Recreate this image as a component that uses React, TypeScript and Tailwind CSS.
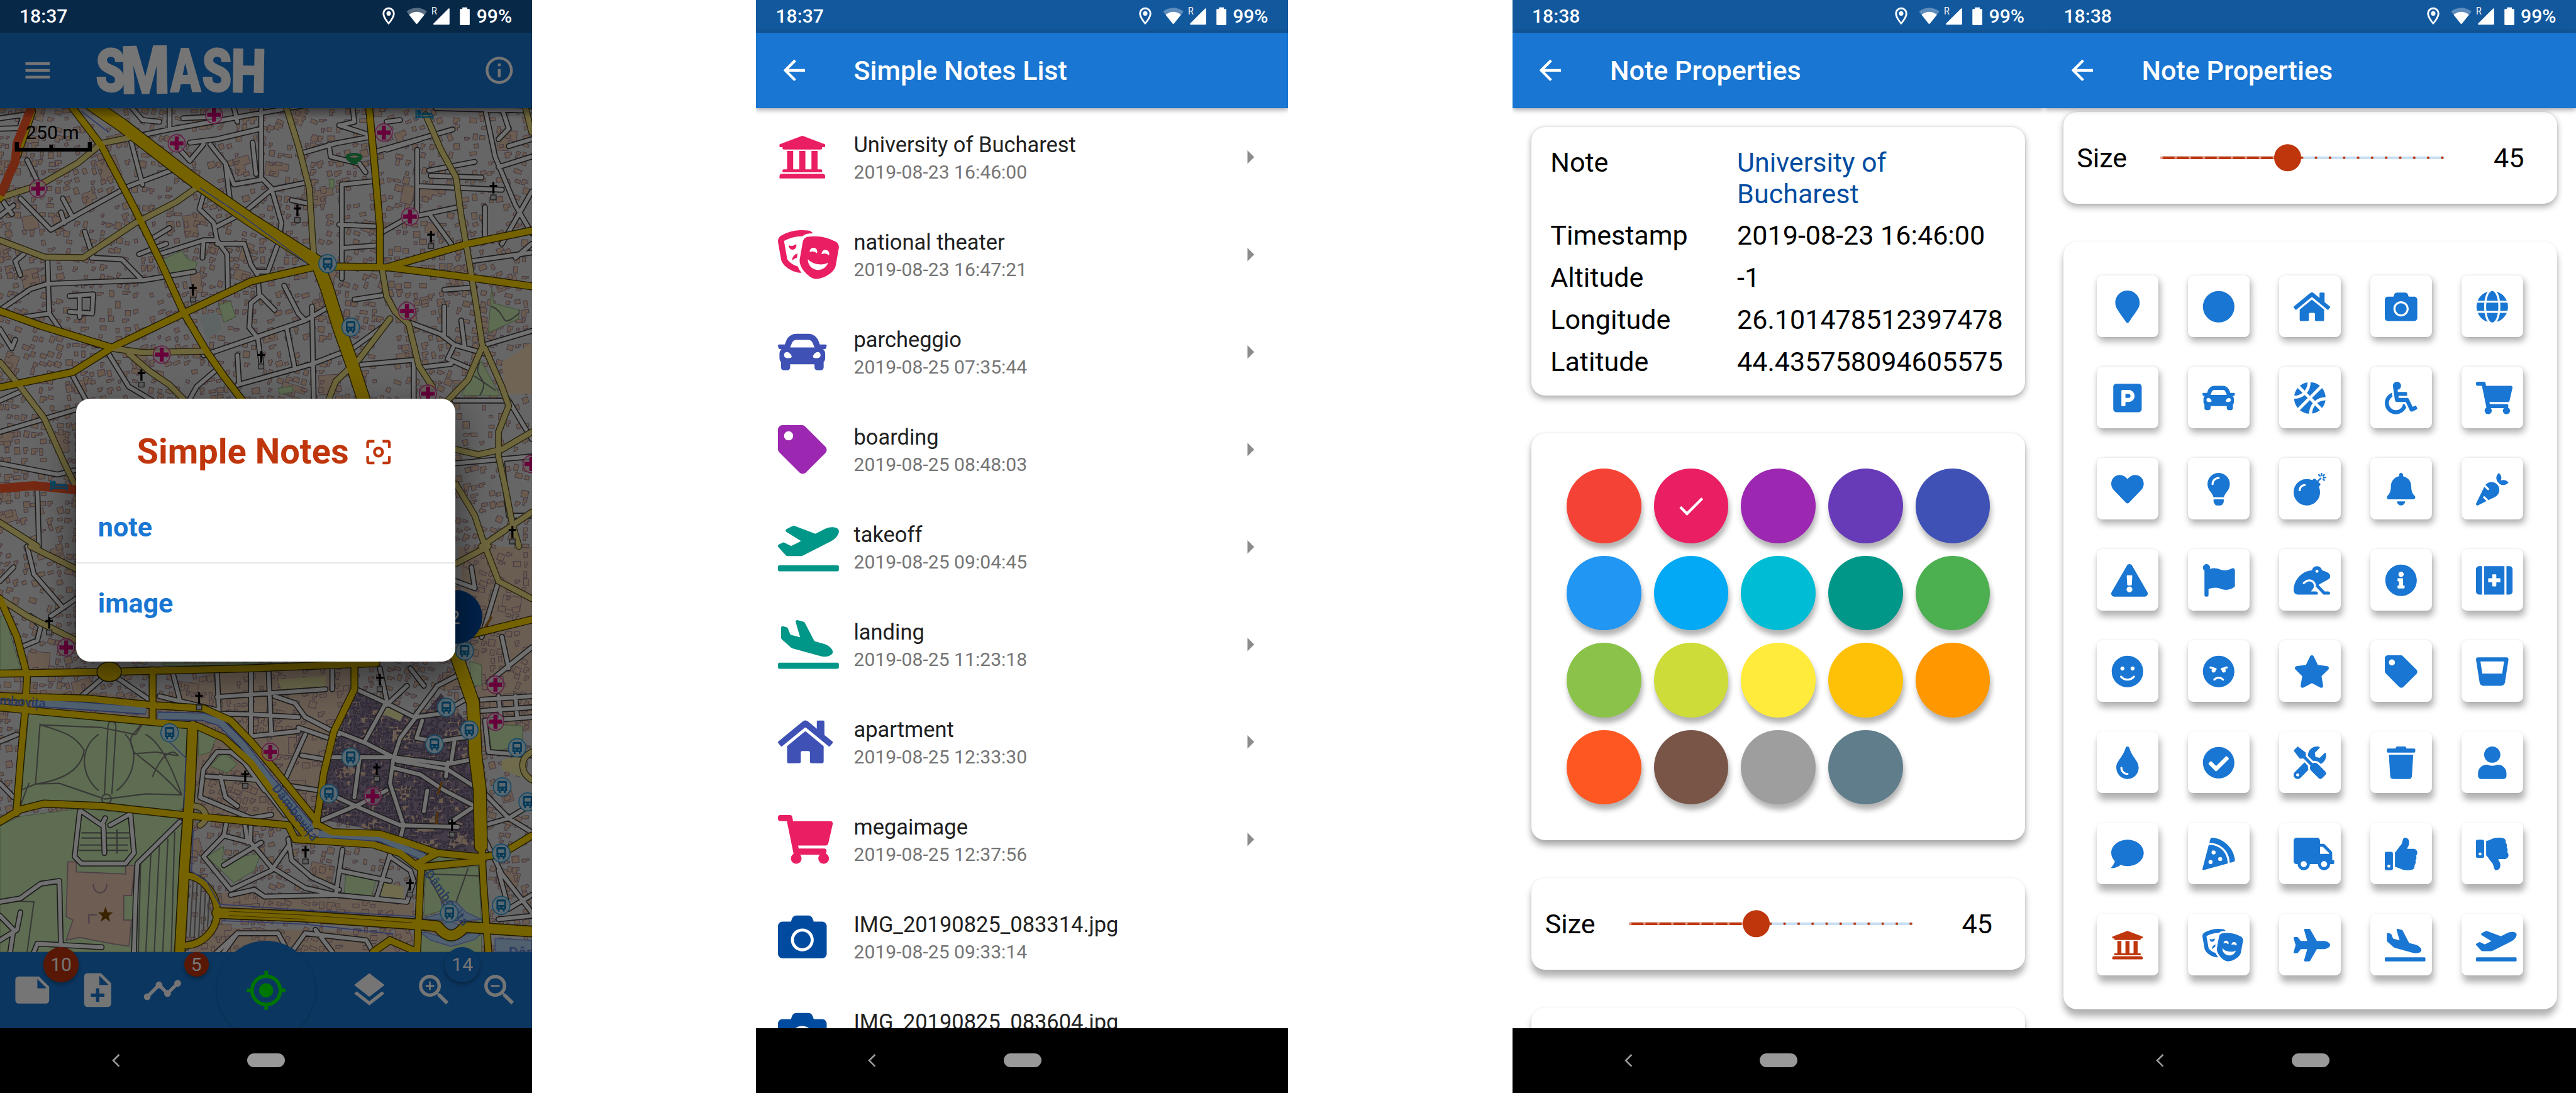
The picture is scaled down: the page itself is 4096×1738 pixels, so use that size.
import type { ReactNode } from "react";
import type { IconType } from "react-icons";
import {
  FaAngry, FaBasketballBall, FaBell, FaBomb, FaCamera, FaCar, FaCarrot, FaCheckCircle, FaCircle, FaComment,
  FaExclamationTriangle, FaFirstAid, FaFlag, FaFrog, FaGlassWhiskey, FaGlobe, FaHeart, FaHome, FaInfoCircle,
  FaLightbulb, FaMapMarker, FaParking, FaPizzaSlice, FaPlane, FaPlaneArrival, FaPlaneDeparture, FaShoppingCart,
  FaSmile, FaStar, FaTag, FaTheaterMasks, FaThumbsDown, FaThumbsUp, FaTint, FaTools, FaTrash, FaTruck,
  FaUniversity, FaUser, FaWheelchair,
} from "react-icons/fa";
import {
  MdArrowBack, MdArrowRight, MdCenterFocusWeak, MdDone, MdGpsFixed, MdInfoOutline, MdLayers, MdMenu, MdNote,
  MdNoteAdd, MdTimeline, MdZoomIn, MdZoomOut,
} from "react-icons/md";

/* ------------------------------------------------------------------ */
/* Device chrome                                                       */
/* ------------------------------------------------------------------ */

function StatusBar({ time }: { time: string }) {
  return (
    <div className="relative z-30 flex h-6 shrink-0 items-center justify-between bg-black/25 pr-[14.6px] pl-[14.4px] text-sm font-medium text-white">
      <span className="leading-6">{time}</span>
      <div className="flex items-center">
        <svg viewBox="225 0 580 198" className="h-6 w-[70.3px] fill-white">
          <path d="M271 45c-21 0-37 17-37 38 0 27 37 67 37 67s37-40 37-67c0-21-16-38-37-38zm0 12c14 0 26 11 26 26 0 16-17 40-26 52-9-12-26-36-26-52 0-15 12-26 26-26z" />
          <circle cx="271" cy="82" r="13.5" />
          <path d="M380 70c34-29 90-29 124 0l-15 20c-26-24-68-24-94 0z" opacity=".32" />
          <path d="M395 90c26-24 68-24 94 0l-42 53q-5 5-10 0z" />
          <path d="M636 52q6-3 6 4v90q0 4-4 4h-92q-6-1-2-6z" />
          <path d="M720 45h30v10h11q4 0 4 4v90q0 4-4 4h-52q-4 0-4-4V59q0-4 4-4h11z" />
          <text x="532" y="89" fontSize="60" textLength="34" lengthAdjust="spacingAndGlyphs" fontWeight="400">R</text>
        </svg>
        <span className="leading-6">99%</span>
      </div>
    </div>
  );
}

function NavBar() {
  return (
    <div className="relative z-30 mt-auto flex h-12 shrink-0 items-center bg-black">
      <svg viewBox="0 0 6 10" className="ml-[82.6px] h-[9.6px] w-[6px] fill-none stroke-[#9a9a9a] stroke-[1.3]">
        <path d="M5.4 .5L.9 5l4.5 4.5" />
      </svg>
      <div className="ml-[94px] h-[10.2px] w-7 rounded-full bg-[#999]" />
    </div>
  );
}

function Phone({ time, children }: { time: string; children: ReactNode }) {
  return (
    <section className="relative flex h-[807.3px] w-[392.73px] shrink-0 flex-col overflow-hidden bg-white">
      <div className="absolute inset-x-0 top-0 h-6 bg-[#1976d2]" />
      <StatusBar time={time} />
      {children}
      <NavBar />
    </section>
  );
}

function TitleBar({ title }: { title: string }) {
  return (
    <header className="relative z-10 flex h-14 shrink-0 items-center bg-[#1976d2] pl-4 text-white shadow-[0_1px_4px_rgba(0,0,0,.4)]">
      <MdArrowBack className="h-6 w-6" />
      <h1 className="ml-8 pt-[1.5px] text-xl font-medium">{title}</h1>
    </header>
  );
}

/* Glyphs drawn wider than tall; they keep their full height and run past the right edge of the box. */
const wideIcons = new Set<IconType>([
  FaHome, FaShoppingCart, FaExclamationTriangle, FaFrog, FaFirstAid, FaStar, FaTruck, FaTheaterMasks, FaPlane,
  FaPlaneArrival, FaPlaneDeparture,
]);

function NoteIcon({ icon: Icon, className }: { icon: IconType; className: string }) {
  return (
    <Icon
      className={`shrink-0 overflow-visible ${className}`}
      preserveAspectRatio={wideIcons.has(Icon) ? "xMinYMid slice" : "xMidYMid meet"}
    />
  );
}

/* ------------------------------------------------------------------ */
/* Street map                                                          */
/* ------------------------------------------------------------------ */

/* The map is split in two tiles; the lower one starts at y = 1568. */
type Tiles = { upper: string; lower: string };

const streets: Tiles = {
  upper: `M400 392L500 372L770 325L1000 285M385 400L420 530M60 570L150 660L240 610L380 535L530 480M80 460L115 530M185 570L215 625M180 610L190 640
M560 410L640 400L770 370M600 415L560 462L530 430M620 415L665 470L690 530L775 515L800 540L830 640L820 700L790 780L760 780M665 470L680 590M640 650L720 610L800 545
M800 545L900 525M890 440L990 412L1100 392M1110 435L1335 372M970 415L975 450L1060 470L1078 495M770 311L770 515M500 311L500 370M600 560L588 600L630 640L640 690L600 690L470 730
M640 690L670 730L672 830M640 700L720 700L740 760L760 790L765 850L740 870L735 940L760 970L770 1040M600 695L597 740M1010 530L1105 520M1008 530L1008 800M1000 645L1105 650M1010 712L1110 705
M1230 430L1230 610L1125 668M1240 535L1480 545M1230 620L1350 595M1430 311L1460 450L1520 590L1568 670M1568 550L1480 700M1270 620L1330 700M1430 595L1430 680M1470 480L1568 450M1390 750L1568 725
M1310 832L1400 825M1045 860L1125 848M0 890L90 830L140 815L270 810L420 805L572 780M140 740L145 900L180 950L290 992M270 740L360 745L415 800M250 665L275 740M145 900L60 912
M0 945L35 1000L45 975M310 1000L380 1110L450 1150M215 1080L260 1160M0 1150L70 1120M0 1240L225 1175M0 1330L170 1362L220 1350M110 1400L115 1568M600 1020L900 920L990 870
M920 880L925 1145M845 940L870 1060M700 1105L920 1045L1040 1000L1140 930M700 1020L705 1100M640 1060L580 1110L560 1145M838 820L880 900L900 920M770 850L810 890M1055 1048L1220 1033M1220 1033L1220 1145
M1240 1055L1330 1045M1205 925L1300 960L1340 990L1430 1015M1310 880L1310 960M1360 920L1370 995M1430 990L1568 950M1320 1030L1390 1060M1340 990L1320 1030M1340 1150L1500 1150M1343 1330L1568 1310
M1480 1320L1500 1480L1568 1480M1500 1150L1568 1260M1265 490L1400 465M1270 505L1420 510M1040 311L1045 350L1005 360M1140 350L1180 345M1000 360L1080 385M1140 430L1240 400M1285 311L1568 318M1480 311L1500 370L1470 400M1568 400L1500 420
M0 620L40 590M10 580L35 615M0 340L70 330L60 360M0 370L60 368M410 730L490 700M440 690L500 655M205 850L275 845L272 900L205 895M235 850L235 910M70 730L45 750L60 790M390 311L420 345L470 350M690 311L700 350M540 340L640 335M860 575L910 585M745 410L755 500M1568 700L1520 740`,
  lower: `M240 430L300 380M350 380L440 440M510 365L530 440M640 360L645 470M740 355L740 540M792 355L800 540M640 432L960 410M650 480L740 482L880 490M740 545L880 530M470 430L640 470M980 350L980 410
M810 430L870 450L900 490L1000 540M880 520L985 555M1050 410L1140 450L1225 492L1180 550L1160 610L1150 680L1190 800M990 530L1080 565L1160 605L1320 625L1400 610M1120 350L1140 440M1140 445L1075 560M1140 455L1200 400
M1225 485L1290 400L1360 365M1210 350L1250 400M1225 490L1300 480L1370 440M1245 500L1228 550L1290 560L1390 545M970 605L1150 605M1060 610L1045 720M950 700L1060 750L1180 800L1350 805M950 785L1060 740L1140 700
M1160 635L1240 655L1310 700L1400 745L1330 790M1170 615L1320 640L1400 690M1320 620L1315 660M1190 800L1175 860M1260 700L1250 760M1340 560L1330 620M1420 700L1500 780L1568 820M1430 800L1500 780L1568 740M1430 840L1480 940L1568 1050
M1420 440L1568 430M1420 472L1568 462M1430 500L1568 490M1470 430L1478 500M1520 430L1525 490M1430 500L1440 590L1568 600M600 640L590 720L740 780L800 770M640 590L680 590L720 620L780 700M610 660L760 670L840 770M640 590L600 640M650 660L665 720L700 745
M670 780L660 830L600 890L680 985L800 930L850 860M660 830L740 850L800 920L900 980L990 1000M770 850L660 915M680 1000L750 985L780 1005L990 1000L1200 1020L1220 960L1210 930L1150 890M1010 870L990 1000M1150 885L1110 1010M1000 930L1150 960
M850 840L860 900L920 950L1000 985M730 850L720 780M740 780L738 850M840 685L940 700M900 540L840 670M890 600L950 610M0 100L40 60M80 0L100 80L180 170M150 200L225 150M60 290L110 270L120 230L90 200M1470 100L1420 260M1343 100L1400 120L1390 60M1440 390L1568 290M1500 350L1480 260
M235 760L220 890L240 910L370 910L395 880L385 770M240 760L300 800L310 780M325 800L380 770M305 800L308 880M530 790L405 910L400 1000L395 1164M180 1164L175 960L120 968L60 1010L0 1020M100 1164L110 1140L300 1150M0 1060L40 1100L30 1164M60 1050L50 1100L0 1130M1470 930L1500 1040L1568 1000M1568 1060L1470 1070M640 1164L700 1110L820 1110L850 1164M860 1164L900 1110L1080 1130L1100 1164M930 1100L980 1164M700 1110L660 1164M0 560L50 540M0 680L40 720`,
};

const lanes: Tiles = {
  upper: `M0 568L120 530L230 468L300 412L400 392M0 690L130 738L245 740L400 640L520 580L590 532M845 311L880 420L912 540L925 735M1255 330L1300 430L1345 510L1360 620L1385 760L1405 880L1422 990
M1128 780L1140 850L1165 895L1205 930L1235 1050L1275 1110M1150 915L1060 1030L990 1095L970 1145M330 1000L420 1012L610 1008M380 1015L440 1065L500 1105L540 1145M0 1040L60 1110L130 1200L190 1330L225 1400
M1420 1000L1380 1090L1320 1150M1430 1000L1480 1110L1500 1165L1470 1240L1470 1310L1490 1400L1510 1500L1530 1568M1343 1290L1410 1305L1480 1290L1568 1240M1345 1390L1400 1480L1430 1568M1420 1568L1568 1470M1550 311L1568 380M0 1500L110 1568`,
  lower: `M0 150L80 200L225 270M90 0L225 65M1343 50L1440 0M1430 0L1470 100L1568 150M1568 590C1530 610 1535 650 1568 670M590 800C625 780 600 740 565 745`,
};

const avenues: Tiles = {
  upper: `M210 305L300 420L400 605L480 765L540 895L610 1010L660 1080L715 1150M1088 305L1105 480L1120 650L1120 765M0 893L120 935L330 998L540 900L740 808L920 768M0 1112L215 1068L330 998M985 765L1150 768L1370 795L1568 822M1140 768L1380 700L1568 662M95 320L50 450L0 570`,
  lower: `M0 365L320 360L740 350L1110 335M0 430L260 437L440 455L600 465L680 500L740 560L810 640L935 790M0 462L80 470L300 490L460 505L580 515L660 550L740 620L860 780L905 835M1045 345L1045 410L985 530L955 650L932 800M450 355L450 500M80 370L75 460L60 620L48 765M0 150L50 260L80 370
M0 790L60 755L130 738L300 745L530 770L850 800L870 840L1100 855L1180 880L1240 925M930 795L980 820L1120 825L1200 850L1290 880L1420 892L1480 882L1568 830M1240 920L1420 903M1230 910L1290 880M555 945C600 950 640 1000 640 1050C640 1100 600 1140 550 1145M1242 915L1230 1164M1420 860L1425 960L1440 1164M1150 1130L1230 1164M1150 1130L1100 1164M1380 255L1568 210`,
};

const trunks: Tiles = {
  upper: `M270 300L360 360L560 510L740 632L935 752L965 830L1000 940L1040 1050L1075 1155`,
  lower: `M1345 310L1395 450L1402 600L1415 700L1418 860`,
};

const boulevards: Tiles = {
  upper: ``,
  lower: `M568 515L560 700L545 900L530 1164M640 1052L900 1062L1240 1085L1290 1090C1320 1125 1340 1125 1370 1092L1568 1105`,
};

const parks: Tiles = {
  upper: `M480 745L535 720L552 742L582 755L575 772L500 795ZM645 875L680 865L695 910L660 925ZM1450 825L1455 870L1530 890L1530 915L1440 955ZM1415 1030L1475 1135L1360 1135ZM820 1115L860 1108L865 1125L825 1132ZM970 515H985V540H972Z`,
  lower: `M85 480L555 515L540 750L520 762L130 730L60 745ZM0 800L60 775L240 752L525 780L540 800L525 1164L0 1164ZM585 525L640 545L620 590L585 600ZM1255 930L1410 918L1420 1080L1380 1060L1320 1040L1250 1060ZM0 200L15 200L60 350L0 360ZM1440 510L1540 515L1540 570L1450 590ZM1385 330L1420 340L1420 400L1390 400ZM620 630L660 590L700 625L670 650ZM610 890L660 860L655 900L770 880L750 930L690 965ZM1020 940L1110 955L1095 1005L1015 995ZM1290 885L1370 898L1270 905ZM1240 1110L1330 1140L1420 1115V1164H1240ZM480 335H800V342H480Z`,
};

const water: Tiles = {
  upper: ``,
  lower: `M1300 1085L1328 1075L1358 1088L1328 1108ZM1240 1108L1260 1108L1330 1130L1400 1105L1422 1105L1400 1128L1330 1148L1270 1130ZM1460 1125L1568 1130V1164H1460ZM1245 1068L1310 1050L1300 1020L1345 1020L1375 1050L1420 1070L1360 1075L1300 1072Z`,
};

const footpaths: Tiles = {
  upper: `M1450 880C1500 900 1470 950 1530 900M1415 1040C1390 1090 1450 1080 1415 1135M1400 1080L1460 1120`,
  lower: `M118 510L105 680M118 512C180 530 220 540 248 585C240 640 190 670 105 682L60 700M118 512L300 520M105 682L175 680L310 725L430 710L535 713M318 520L308 710M342 520L330 710M318 520C318 495 342 495 342 520M300 725A14 14 0 1 0 328 725A14 14 0 1 0 300 725
M290 540C230 580 240 660 290 700M370 540C410 580 400 660 345 700M415 510C400 540 370 540 395 590C430 620 480 650 535 713M430 540C470 560 500 620 535 710M395 595L460 590L520 600M300 520L400 540L420 510M450 660C480 590 510 580 525 600M60 745L85 680
M408 1164L415 900M430 1164L445 880M455 1164L470 860M480 1164L495 840M505 1164L515 820M0 1015L100 1020L80 1164M1255 930L1310 1030M1380 925L1345 1020M1270 940L1410 945M570 950L560 1120M582 960L572 1130M594 965L586 1120M606 985L600 1100M618 1000L612 1090`,
};

/* Small deterministic generator so that the building pattern is stable. */
function makeRandom(seed: number) {
  let state = seed;
  return () => {
    state = (state * 1664525 + 1013904223) % 4294967296;
    return state / 4294967296;
  };
}

function scatterBuildings(x0: number, y0: number, x1: number, y1: number, step: number, density: number, seed: number) {
  const random = makeRandom(seed);
  const parts: string[] = [];
  for (let y = y0; y < y1; y += step) {
    for (let x = x0; x < x1; x += step) {
      const keep = random() < density;
      const w = step * (0.35 + random() * 0.55);
      const h = step * (0.3 + random() * 0.5);
      const jx = (random() - 0.5) * step * 0.4;
      const jy = (random() - 0.5) * step * 0.4;
      const notch = random();
      const block = Math.floor(x / 190) * 7 + Math.floor(y / 210) * 13;
      const turn = -0.35 + ((block * 37) % 11) / 14;
      if (!keep) continue;
      const c = Math.cos(turn);
      const s = Math.sin(turn);
      const corners =
        notch > 0.45
          ? [[-w, -h], [w, -h], [w, h], [-w, h]]
          : [[-w, -h], [w, -h], [w, 0], [w * 0.2, 0], [w * 0.2, h], [-w, h]];
      parts.push(
        "M" +
          corners
            .map(([px, py]) => `${(x + jx + (px * c - py * s) / 2).toFixed(1)} ${(y + jy + (px * s + py * c) / 2).toFixed(1)}`)
            .join("L") +
          "Z",
      );
    }
  }
  return parts.join("");
}

const houses = scatterBuildings(0, 320, 1568, 2740, 25, 0.6, 7);
const bigHouses = scatterBuildings(20, 330, 1568, 2740, 78, 0.2, 41);
const oldTown = scatterBuildings(950, 1900, 1420, 2460, 12, 0.8, 99);

const hospitals = [
  [631, 330], [521, 412], [1132, 381], [112, 542], [1209, 622], [1200, 893], [477, 1018], [1262, 1130], [1567, 1332],
  [195, 1858], [797, 2158], [1099, 2285], [1461, 1965], [1461, 2071],
];
const churches = [
  [877, 605], [1455, 540], [1271, 680], [569, 833], [417, 1077], [770, 1025], [1511, 1527],
  [145, 1788], [587, 2003], [723, 2228], [1120, 1951], [1111, 2208], [901, 2445], [1209, 2540], [1333, 2368],
];
const stations = [
  [966, 757], [1034, 939], [1370, 1868], [1316, 2030], [1281, 2136], [1384, 2095], [1034, 2173], [970, 2277],
  [1525, 2146], [1481, 2258], [1556, 2301], [1478, 2448], [1478, 2598], [1325, 2620], [500, 2103],
];

function Layer({ d, className }: { d: Tiles; className: string }) {
  return (
    <g className={className} strokeLinejoin="round" strokeLinecap="round">
      <path d={d.upper} />
      <path d={d.lower} transform="translate(0 1568)" />
    </g>
  );
}

function StreetMap() {
  return (
    <svg viewBox="0 311 1568 2421" preserveAspectRatio="none" className="absolute inset-0 h-full w-full">
      <rect y="300" width="1568" height="2440" className="fill-[#dfdfdf]" />
      <path
        d="M0 1980L240 1980L450 2010L640 1920L1040 1920L960 2350L700 2350L560 2090L0 2030ZM580 2100L700 2150L850 2380L640 2380L580 2300ZM1350 1570L1568 1570V2100L1420 2080ZM600 2660L1230 2680V2732H560ZM620 2560L1220 2590V2630H640Z"
        className="fill-[#e6cbb4]"
      />
      <path d="M1045 1970L1130 2010L1240 2060L1300 1990L1385 2080L1400 2200L1415 2450L1280 2440L1140 2390L940 2350L975 2180Z" className="fill-[#94849c]" />
      <path d={bigHouses} className="fill-[#e6c9ae] stroke-[#a58a9e] stroke-2" />
      <path d={houses} className="fill-[#e6c6aa] stroke-[#9a8297] stroke-2" />
      <clipPath id="old-town">
        <path d="M1045 1970L1130 2010L1240 2060L1300 1990L1385 2080L1400 2200L1415 2450L1280 2440L1140 2390L940 2350L975 2180Z" />
      </clipPath>
      <path d={oldTown} clipPath="url(#old-town)" className="fill-[#9a828c] stroke-[#655a7a] stroke-[2.5]" />
      <path d="M585 905L640 895L655 945L610 975Z" className="fill-[#cddada]" />
      <path d="M1480 1040L1568 985V1130L1490 1130Z" className="fill-[#f3dcba]" />
      <path d="M820 1950L960 1940V1970L830 1980ZM1130 2025L1190 2050L1180 2070L1120 2045ZM1125 2530L1190 2545V2580L1120 2570ZM1480 2180L1540 2170V2230L1480 2210Z" className="fill-[#f2ecab]" />
      <Layer d={parks} className="fill-[#cdeeb4] stroke-[#8fb483] stroke-2" />
      <Layer d={water} className="fill-[#aed2f2] stroke-[#7f97e0] stroke-[3]" />
      <Layer d={footpaths} className="fill-none stroke-[#7c7c78] stroke-[4]" />

      {/* palace and its forecourt */}
      <path d="M200 2473H225V2502L370 2508V2483H397L388 2570H365V2640H388L380 2715L330 2708L235 2690L195 2698L215 2640L195 2630Z" className="fill-[#edcbb2] stroke-[#a58a9e] stroke-[3]" />
      <path d="M275 2537C275 2570 315 2570 315 2537M262 2650V2625H285" className="fill-none stroke-[#a58a9e] stroke-[4]" />
      <path d="M240 2390H380M240 2405H380M235 2425H378M232 2440H378M345 2380V2450" className="fill-none stroke-[#777] stroke-[4]" />

      <Layer d={streets} className="fill-none stroke-[#3d3d3d] stroke-[17]" />
      <Layer d={streets} className="fill-none stroke-[#f4f4f4] stroke-[11]" />
      <Layer d={lanes} className="fill-none stroke-[#574f25] stroke-[20]" />
      <Layer d={avenues} className="fill-none stroke-[#453a00] stroke-[23]" />
      <Layer d={boulevards} className="fill-none stroke-[#453a00] stroke-[34]" />
      <Layer d={trunks} className="fill-none stroke-[#453a00] stroke-[41]" />
      <Layer d={lanes} className="fill-none stroke-[#f0de84] stroke-[15]" />
      <g transform="translate(0 1568)" className="fill-none">
        <path d="M100 448L430 471M465 486L600 489L650 505L715 568L790 662L922 812M940 825L1120 836L1252 892" className="stroke-[#5f76d8] stroke-[24]" />
        <path d="M100 448L430 471M465 486L600 489L650 505L715 568L790 662L922 812M940 825L1120 836L1252 892" className="stroke-[#aed2f2] stroke-[18]" />
      </g>
      <Layer d={avenues} className="fill-none stroke-[#ffd600] stroke-[18]" />
      <Layer d={boulevards} className="fill-none stroke-[#ffd600] stroke-[28]" />
      <Layer d={trunks} className="fill-none stroke-[#ffd600] stroke-[36]" />
      <ellipse cx="322" cy="1928" rx="36" ry="28" className="fill-[#ffd600] stroke-[#453a00] stroke-[3]" />
      <path d="M675 2615L900 2626L1215 2648M675 2627L900 2638" className="fill-none stroke-[#8a7000] stroke-[2]" />
      <path d="M650 2595L900 2612L1225 2630M570 2380L565 2500L610 2530L650 2600M655 2642L900 2652L1160 2680M490 2120L548 2175L542 2320M240 320L320 380M590 540L700 610L905 755" className="fill-none stroke-[#6b82e6] stroke-[3]" />
      <path d="M92 311L50 412L45 465L28 500L15 530L0 560M0 1402L100 1394L226 1406" className="fill-none stroke-[#ff5a2b] stroke-[26]" />
      <path d="M1303 2245L1290 2280M1290 2330L1286 2365M1450 1770L1430 1800" className="fill-none stroke-[#b5701a] stroke-[7]" />

      <g className="fill-[#5a7fd0] font-medium" fontSize="38">
        <text x="-2" y="2022" transform="rotate(4 0 2022)" textLength="136">mbovița</text>
        <text x="800" y="2262" transform="rotate(52 800 2262)" textLength="196">Dâmbovița</text>
        <text x="1250" y="2508" transform="rotate(53 1250 2508)" textLength="190">Dâmbovița</text>
        <text x="1500" y="2748" fontSize="44">Dâm</text>
      </g>

      {hospitals.map(([x, y]) => (
        <g key={`h${x}-${y}`} transform={`translate(${x} ${y})`}>
          <ellipse rx="25" ry="25" className="fill-[#dfdfdf]/60 stroke-[#e0409c] stroke-[3]" />
          <path d="M-6-20H6V-6H20V6H6V20H-6V6H-20V-6H-6Z" className="fill-[#e0007f]" />
        </g>
      ))}
      {churches.map(([x, y]) => (
        <g key={`c${x}-${y}`} transform={`translate(${x} ${y})`}>
          <path d="M-3-17H3V-9H11V-3H3V16H-3V-3H-11V-9H-3Z" className="fill-black" />
          <rect x="-8" y="20" width="16" height="14" className="fill-[#c9c9c9] stroke-[#444] stroke-[2.5]" />
        </g>
      ))}
      {stations.map(([x, y]) => (
        <g key={`s${x}-${y}`} transform={`translate(${x} ${y})`}>
          <circle r="26" className="fill-[#c4e2f2] stroke-[#2f9fdc] stroke-[3]" />
          <path d="M-14-12Q-14-17-9-17H9Q14-17 14-12V12H10V18H5V12H-5V18H-10V12H-14ZM-9-11V-1H9V-11ZM-8 4V8H-4V4ZM4 4V8H8V4Z" fillRule="evenodd" className="fill-[#0e7fc0]" />
        </g>
      ))}
      {[[1251, 330], [174, 1395]].map(([x, y]) => (
        <path
          key={`b${x}`}
          transform={`translate(${x} ${y})`}
          d="M-26-16H-22V4H22V-2H26V14H22V9H-22V14H-26ZM-8-6H22V1H-8ZM-20-6A6 6 0 1 1-10-6A6 6 0 1 1-20-6"
          className="fill-[#0f9be0]"
        />
      ))}
      <path
        d="M1020 452A25 10 0 1 1 1068 452Q1066 464 1054 466L1056 472H1032L1034 466Q1022 464 1020 452ZM1030 450A15 5 0 0 0 1058 450A15 5 0 0 0 1030 450Z"
        fillRule="evenodd"
        className="fill-[#1fa050]"
      />
      <path d="M311 2602L317 2618H333L320 2629L325 2645L311 2635L297 2645L302 2629L289 2618H305Z" className="fill-[#7a4a00]" />
    </svg>
  );
}

/* ------------------------------------------------------------------ */
/* Phone 1: map with the notes dialog                                  */
/* ------------------------------------------------------------------ */

const wordmark = [
  { letter: "S", x: 195, y: 185, size: 120, squeeze: 0.8, tilt: 0 },
  { letter: "M", x: 247, y: 190, size: 134, squeeze: 0.84, tilt: -1 },
  { letter: "A", x: 347, y: 186, size: 123, squeeze: 0.73, tilt: -1 },
  { letter: "S", x: 411, y: 185, size: 120, squeeze: 0.8, tilt: 0 },
  { letter: "H", x: 469, y: 186, size: 122, squeeze: 0.83, tilt: 1 },
];

function Wordmark() {
  return (
    <svg viewBox="182 66 370 154" className="h-14 w-[134.55px] overflow-visible fill-white stroke-white stroke-[3]" aria-label="SMASH">
      {wordmark.map(({ letter, x, y, size, squeeze, tilt }) => (
        <text key={x} fontSize={size} fontWeight="900" transform={`translate(${x} ${y}) rotate(${tilt}) scale(${squeeze} 1)`}>
          {letter}
        </text>
      ))}
    </svg>
  );
}

function ToolButton({ icon: Icon, badge, badgeClass }: { icon: IconType; badge?: string; badgeClass?: string }) {
  return (
    <div className="relative flex h-14 w-12 items-center justify-center">
      <Icon className="h-[30px] w-[30px]" />
      {badge && (
        <span className={`absolute flex items-center justify-center rounded-full text-sm shadow-[0_1.5px_3px_rgba(0,0,0,.35)] ${badgeClass}`}>
          {badge}
        </span>
      )}
    </div>
  );
}

function MapPhone() {
  return (
    <Phone time="18:37">
      <header className="relative flex h-14 shrink-0 items-center bg-[#1976d2] px-4 text-white">
        <MdMenu className="h-6 w-6" />
        <div className="ml-[26.2px]">
          <Wordmark />
        </div>
        <MdInfoOutline className="-mr-1 ml-auto h-6 w-6" />
      </header>
      <main className="relative flex-1">
        <StreetMap />
        <div className="absolute inset-x-0 top-0 h-2 bg-linear-to-b from-black/40 to-transparent" />
        <div className="absolute top-[9.7px] left-[10.5px] w-[57.4px]">
          <p className="pl-[8.6px] text-sm leading-[17px] text-black">250 m</p>
          <svg viewBox="0 0 158 20" className="-mt-[1.9px] block h-[7.2px] w-full fill-black">
            <path d="M0 0H8.3V11.5H71V6H78.5V11.5H149.7V0H158V19.7H0Z" />
          </svg>
        </div>
        <div className="absolute top-[355.8px] left-[316.4px] flex h-10 w-10 items-center justify-center rounded-full bg-[#004ba0] pr-[9px] text-sm text-white shadow-lg">
          12
        </div>
      </main>
      <footer className="relative flex h-14 shrink-0 items-center justify-between bg-[#1976d2] text-white">
        <div className="flex">
          <ToolButton icon={MdNote} badge="10" badgeClass="bg-[#bf360c] h-[26px] w-[26px] left-[32.1px] -top-1" />
          <ToolButton icon={MdNoteAdd} />
          <ToolButton icon={MdTimeline} badge="5" badgeClass="bg-[#bf360c] h-[18px] w-[18px] left-10 top-0" />
        </div>
        <div className="absolute -top-[8.5px] left-1/2 flex h-[73px] w-[73px] -translate-x-1/2 items-center justify-center rounded-full bg-[#1976d2] shadow-[0_0.5px_1.5px_rgba(0,0,0,.28)]">
          <MdGpsFixed className="h-[31.4px] w-[31.4px] text-[#00ff00]" />
        </div>
        <div className="flex">
          <ToolButton icon={MdLayers} />
          <ToolButton icon={MdZoomIn} badge="14" badgeClass="bg-[#1976d2] h-[26px] w-[26px] left-[31.8px] -top-1" />
          <ToolButton icon={MdZoomOut} />
        </div>
      </footer>
      <div className="absolute inset-0 z-20 bg-black/54" />
      <div className="absolute top-[294.7px] left-[56.36px] z-20 h-[193.9px] w-[280px] rounded-[10px] bg-white font-bold shadow-[0_10px_26px_2px_rgba(0,0,0,.45)]">
        <div className="flex h-[65.6px] items-center justify-center gap-[10px] pt-[12.4px] text-[#bf360c]">
          <h2 className="text-[26px] leading-8">Simple Notes</h2>
          <MdCenterFocusWeak className="h-6 w-6" />
        </div>
        <ul className="text-xl text-[#1976d2]">
          <li className="flex h-14 items-center border-b border-[#e6e6e6] px-4 pt-[3.6px]">note</li>
          <li className="flex h-14 items-center px-4 pt-[3px]">image</li>
        </ul>
      </div>
    </Phone>
  );
}

/* ------------------------------------------------------------------ */
/* Phone 2: notes list                                                 */
/* ------------------------------------------------------------------ */

const notes: { icon: IconType; color: string; title: string; date: string; photo?: boolean }[] = [
  { icon: FaUniversity, color: "text-[#e91e63]", title: "University of Bucharest", date: "2019-08-23 16:46:00" },
  { icon: FaTheaterMasks, color: "text-[#e91e63]", title: "national theater", date: "2019-08-23 16:47:21" },
  { icon: FaCar, color: "text-[#3f51b5]", title: "parcheggio", date: "2019-08-25 07:35:44" },
  { icon: FaTag, color: "text-[#9c27b0]", title: "boarding", date: "2019-08-25 08:48:03" },
  { icon: FaPlaneDeparture, color: "text-[#009688]", title: "takeoff", date: "2019-08-25 09:04:45" },
  { icon: FaPlaneArrival, color: "text-[#009688]", title: "landing", date: "2019-08-25 11:23:18" },
  { icon: FaHome, color: "text-[#3f51b5]", title: "apartment", date: "2019-08-25 12:33:30" },
  { icon: FaShoppingCart, color: "text-[#e91e63]", title: "megaimage", date: "2019-08-25 12:37:56" },
  { icon: FaCamera, color: "text-[#004ba0]", title: "IMG_20190825_083314.jpg", date: "2019-08-25 09:33:14", photo: true },
  { icon: FaCamera, color: "text-[#004ba0]", title: "IMG_20190825_083604.jpg", date: "2019-08-25 09:36:04", photo: true },
];

function ListPhone() {
  return (
    <Phone time="18:37">
      <TitleBar title="Simple Notes List" />
      <ul className="min-h-0 flex-1 overflow-hidden">
        {notes.map(({ icon, color, title, date, photo }) => (
          <li key={title} className="flex h-[72px] items-center px-4">
            <div className="w-14 shrink-0">
              <NoteIcon icon={icon} className={`h-9 w-9 ${color}`} />
            </div>
            <div className="flex-1 pt-[1.8px]">
              <p className="text-base leading-5 text-[#212121]">{title}</p>
              <p className="text-sm leading-5 text-[#757575]">{date}</p>
            </div>
            {!photo && <MdArrowRight className="h-6 w-6 text-black/45" />}
          </li>
        ))}
      </ul>
    </Phone>
  );
}

/* ------------------------------------------------------------------ */
/* Phones 3 and 4: note properties                                     */
/* ------------------------------------------------------------------ */

function Card({ className, children }: { className: string; children?: ReactNode }) {
  return <div className={`mx-[14px] shrink-0 rounded-[10px] bg-white ${className}`}>{children}</div>;
}

const shadowHigh = "shadow-[0_2px_5px_rgba(0,0,0,.32),0_0_1.5px_rgba(0,0,0,.12)]";
const shadowMiddle = "shadow-[0_3.5px_5px_rgba(0,0,0,.34),0_0_1.5px_rgba(0,0,0,.1)]";
const shadowLow = "shadow-[0_5px_5px_rgba(0,0,0,.3),0_0_1.5px_rgba(0,0,0,.1)]";

const properties = [
  { label: "Note", value: "University of Bucharest", link: true },
  { label: "Timestamp", value: "2019-08-23 16:46:00" },
  { label: "Altitude", value: "-1" },
  { label: "Longitude", value: "26.101478512397478" },
  { label: "Latitude", value: "44.435758094605575" },
];

const palette = [
  "bg-[#f44336]", "bg-[#e91e63]", "bg-[#9c27b0]", "bg-[#673ab7]", "bg-[#3f51b5]",
  "bg-[#2196f3]", "bg-[#03a9f4]", "bg-[#00bcd4]", "bg-[#009688]", "bg-[#4caf50]",
  "bg-[#8bc34a]", "bg-[#cddc39]", "bg-[#ffeb3b]", "bg-[#ffc107]", "bg-[#ff9800]",
  "bg-[#ff5722]", "bg-[#795548]", "bg-[#9e9e9e]", "bg-[#607d8b]",
];

function SizeCard({ className }: { className: string }) {
  const ticks = Array.from({ length: 21 }, (_, i) => i);
  return (
    <Card className={`flex h-[68px] items-center px-[10px] text-xl text-black ${className}`}>
      <span className="w-[60.9px] pt-[1.5px]">Size</span>
      <svg viewBox="0 0 212 24" className="h-6 w-[212px]">
        <rect x="1" y="11" width="210" height="2" rx="1" className="fill-[#c8dff4]" />
        <rect x="1" y="11" width="94" height="2" rx="1" className="fill-[#bf360c]" />
        {ticks.map((i) => (
          <circle key={i} cx={2 + i * 10.36} cy="12" r="1" className={i < 9 ? "fill-[#e49a84]" : "fill-[#bf360c]"} />
        ))}
        <circle cx="95" cy="12" r="10" className="fill-[#bf360c]" />
      </svg>
      <span className="ml-[35px] pt-[1.5px]">45</span>
    </Card>
  );
}

function PropertiesPhone() {
  return (
    <Phone time="18:38">
      <TitleBar title="Note Properties" />
      <main className="flex min-h-0 flex-1 flex-col gap-7 overflow-hidden pt-[14px]">
        <Card className={`p-[10px] text-xl text-black ${shadowHigh}`}>
          {properties.map(({ label, value, link }) => (
            <div key={label} className="flex leading-[23px]">
              <div className="w-2/5 shrink-0 px-1 pt-[4.8px] pb-[3.2px]">{label}</div>
              <div className={`w-3/5 px-1 pt-[4.8px] pb-[3.2px] ${link ? "pr-8 text-[#004ba0]" : ""}`}>{value}</div>
            </div>
          ))}
        </Card>
        <Card className={`h-[300.4px] pt-[26.2px] ${shadowMiddle}`}>
          <div className="mx-auto grid w-[312.6px] grid-cols-5 gap-[9.25px]">
            {palette.map((color, i) => (
              <div key={color} className={`flex h-[55.1px] items-center justify-center rounded-full shadow-[1px_4px_4px_rgba(0,0,0,.3)] ${color}`}>
                {i === 1 && <MdDone className="h-6 w-6 text-white" />}
              </div>
            ))}
          </div>
        </Card>
        <SizeCard className={shadowLow} />
        <Card className={`h-40 ${shadowLow}`} />
      </main>
    </Phone>
  );
}

const iconChoices: IconType[] = [
  FaMapMarker, FaCircle, FaHome, FaCamera, FaGlobe,
  FaParking, FaCar, FaBasketballBall, FaWheelchair, FaShoppingCart,
  FaHeart, FaLightbulb, FaBomb, FaBell, FaCarrot,
  FaExclamationTriangle, FaFlag, FaFrog, FaInfoCircle, FaFirstAid,
  FaSmile, FaAngry, FaStar, FaTag, FaGlassWhiskey,
  FaTint, FaCheckCircle, FaTools, FaTrash, FaUser,
  FaComment, FaPizzaSlice, FaTruck, FaThumbsUp, FaThumbsDown,
  FaUniversity, FaTheaterMasks, FaPlane, FaPlaneArrival, FaPlaneDeparture,
];

const tileShadow = [
  "shadow-[1px_3px_5px_rgba(0,0,0,.3),0_0_1.5px_rgba(0,0,0,.1)]",
  "shadow-[1px_4px_5px_rgba(0,0,0,.3),0_0_1.5px_rgba(0,0,0,.1)]",
  "shadow-[1px_5px_5px_rgba(0,0,0,.3),0_0_1.5px_rgba(0,0,0,.08)]",
];

function IconsPhone() {
  return (
    <Phone time="18:38">
      <TitleBar title="Note Properties" />
      <main className="flex min-h-0 flex-1 flex-col gap-7 overflow-hidden pt-[2.6px]">
        <SizeCard className={shadowHigh} />
        <Card className={`p-[14px] ${shadowLow}`}>
          <div className="grid grid-cols-5">
            {iconChoices.map((icon, i) => (
              <div key={i} className="h-[67.35px] p-[11px]">
                <div className={`flex h-full items-center rounded bg-white px-[10.6px] pt-[0.5px] ${tileShadow[i < 15 ? 0 : i < 25 ? 1 : 2]}`}>
                  <NoteIcon icon={icon} className={`h-6 w-6 ${icon === FaUniversity ? "text-[#bf360c]" : "text-[#1976d2]"}`} />
                </div>
              </div>
            ))}
          </div>
        </Card>
      </main>
    </Phone>
  );
}

/* All sizes below are in density-independent pixels; the zoom turns them into screen pixels. */
export default function App() {
  return (
    <div className="flex h-[807.3px] w-[1902.6px] overflow-hidden bg-white font-['Roboto',sans-serif] [zoom:2.152906]">
      <MapPhone />
      <div className="ml-[165.82px]">
        <ListPhone />
      </div>
      <div className="ml-[165.82px] flex">
        <PropertiesPhone />
        <IconsPhone />
      </div>
    </div>
  );
}
